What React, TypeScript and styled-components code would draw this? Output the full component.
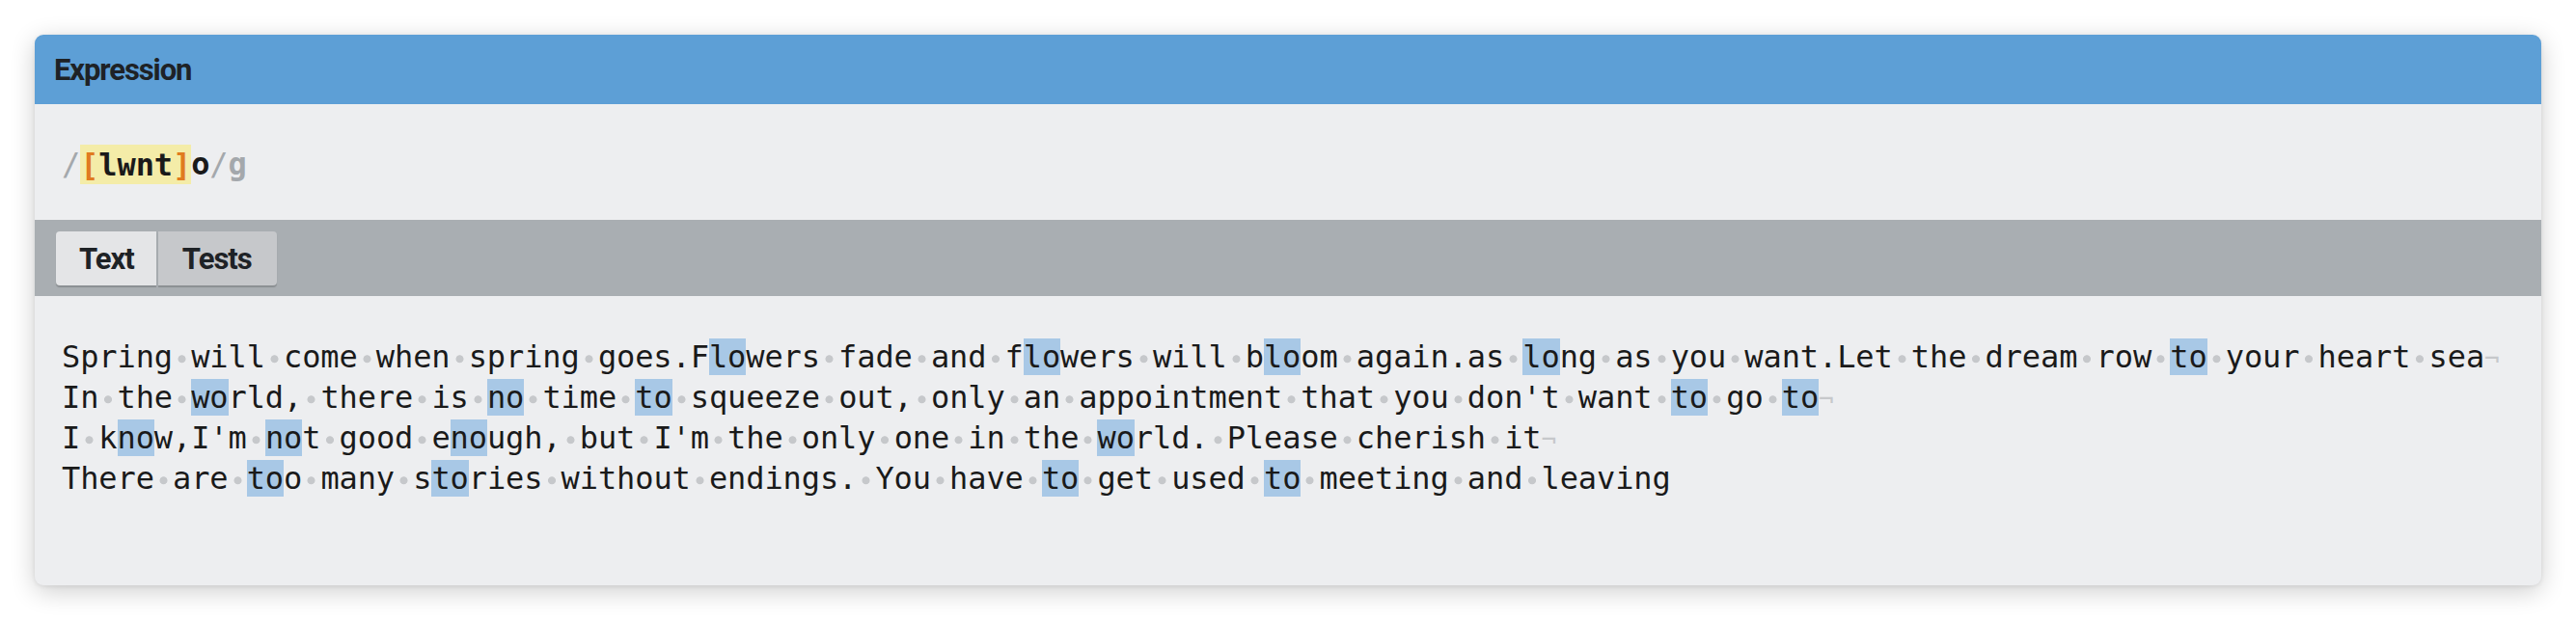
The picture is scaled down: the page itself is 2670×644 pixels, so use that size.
import React from "react";
import styled, { createGlobalStyle } from "styled-components";

const GlobalStyle = createGlobalStyle`
  html, body {
    margin: 0;
    padding: 0;
    background: #ffffff;
  }
  body {
    font-family: Roboto, "Liberation Sans", sans-serif;
  }
`;

const Page = styled.div`
  padding: 36px 36px 37px 36px;
`;

const Panel = styled.section`
  display: flex;
  flex-direction: column;
  height: 571px;
  border-radius: 9px;
  overflow: hidden;
  background: #edeef0;
  box-shadow: 0 6px 26px rgba(0, 0, 0, 0.2), 0 1px 4px rgba(0, 0, 0, 0.08);
`;

const Header = styled.header`
  display: flex;
  align-items: center;
  height: 72px;
  padding: 0 20px;
  background: #5d9fd6;
`;

const Title = styled.h2`
  margin: 0;
  font-family: Roboto, "Liberation Sans", sans-serif;
  font-weight: 700;
  font-size: 31px;
  letter-spacing: -1.1px;
  color: #1e2226;
`;

const ExpressionRow = styled.div`
  height: 120px;
  box-sizing: border-box;
  padding: 42px 28px 38px;
  font-family: "DejaVu Sans Mono", "Liberation Mono", monospace;
  font-size: 32px;
  line-height: 40px;
  letter-spacing: -0.1px;
  font-weight: 700;
  color: #1a1a1a;
  white-space: pre;
`;

const Delim = styled.span<{ $bold?: boolean }>`
  color: #a4a8ac;
  font-weight: ${(p) => (p.$bold ? 700 : 400)};
`;

const CharSet = styled.span`
  background: #f4eca8;
  padding: 1.5px 0;
`;

const Bracket = styled.span`
  color: #e07b1f;
`;

const TabBar = styled.nav`
  display: flex;
  align-items: flex-start;
  height: 79px;
  box-sizing: border-box;
  padding: 12px 22px 0;
  background: #a9aeb2;
`;

const Tab = styled.button<{ $active?: boolean }>`
  height: 56px;
  padding: 0 ${(p) => (p.$active ? "23px" : "26px")} 0
    ${(p) => (p.$active ? "24px" : "25px")};
  margin-right: 2px;
  border: none;
  border-radius: ${(p) => (p.$active ? "4px 0 0 4px" : "0 4px 4px 0")};
  background: ${(p) => (p.$active ? "#e4e5e7" : "#c6c8cb")};
  box-shadow: 0 2px 1px rgba(0, 0, 0, 0.18);
  font-family: Roboto, "Liberation Sans", sans-serif;
  font-weight: 700;
  font-size: 31px;
  letter-spacing: -1px;
  color: #1e2226;
  cursor: pointer;
`;

const TextArea = styled.div`
  flex: 1;
  padding: 43px 28px 0;
  font-family: "DejaVu Sans Mono", "Liberation Mono", monospace;
  font-size: 32px;
  line-height: 40px;
  letter-spacing: -0.1px;
  color: #1a1a1a;
  white-space: pre;
`;

const Line = styled.div``;

const Match = styled.span`
  background: #a8c8e6;
`;

const Space = styled.span`
  background: radial-gradient(circle at 50% 56%, #c6c8cb 3.6px, transparent 4.4px);
`;

const EndMark = styled.span`
  color: #c6c8cb;
  font-size: 26px;
`;

const lines = [
  "Spring will come when spring goes.Flowers fade and flowers will bloom again.as long as you want.Let the dream row to your heart sea",
  "In the world, there is no time to squeeze out, only an appointment that you don't want to go to",
  "I know,I'm not good enough, but I'm the only one in the world. Please cherish it",
  "There are too many stories without endings. You have to get used to meeting and leaving",
];

const pattern = /[lwnt]o/g;

const renderPlain = (text: string, key: string) =>
  text.split(/( )/).map((part, i) =>
    part === " " ? (
      <Space key={`${key}-${i}`}> </Space>
    ) : (
      <React.Fragment key={`${key}-${i}`}>{part}</React.Fragment>
    )
  );

const renderLine = (text: string) => {
  const out: React.ReactNode[] = [];
  let last = 0;
  let m: RegExpExecArray | null;
  pattern.lastIndex = 0;
  while ((m = pattern.exec(text)) !== null) {
    out.push(...renderPlain(text.slice(last, m.index), `p${m.index}`));
    out.push(<Match key={`m${m.index}`}>{m[0]}</Match>);
    last = m.index + m[0].length;
  }
  out.push(...renderPlain(text.slice(last), "end"));
  return out;
};

const App = () => {
  return (
    <Page>
      <GlobalStyle />
      <Panel>
        <Header>
          <Title>Expression</Title>
        </Header>
        <ExpressionRow>
          <Delim>/</Delim>
          <CharSet>
            <Bracket>[</Bracket>lwnt<Bracket>]</Bracket>
          </CharSet>
          o<Delim>/</Delim>
          <Delim $bold>g</Delim>
        </ExpressionRow>
        <TabBar>
          <Tab $active>Text</Tab>
          <Tab>Tests</Tab>
        </TabBar>
        <TextArea>
          {lines.map((l, i) => (
            <Line key={i}>
              {renderLine(l)}
              {i < lines.length - 1 && <EndMark>¬</EndMark>}
            </Line>
          ))}
        </TextArea>
      </Panel>
    </Page>
  );
};

export default App;
